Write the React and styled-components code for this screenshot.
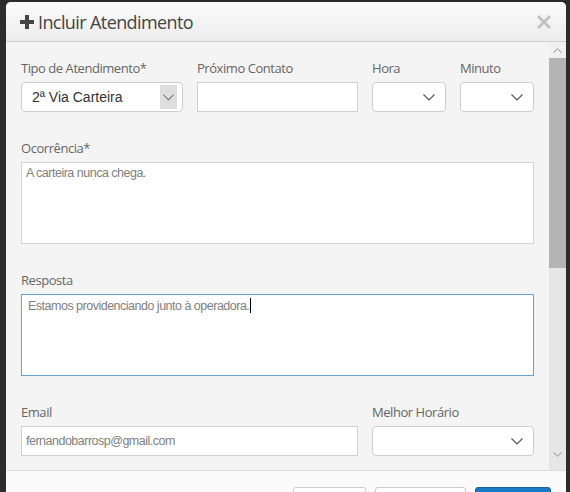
import React from 'react';
import styled, { createGlobalStyle } from 'styled-components';

const GlobalStyle = createGlobalStyle`
  html, body {
    margin: 0;
    padding: 0;
    background: #2c2c2c;
    overflow: hidden;
  }
  * {
    box-sizing: border-box;
  }
`;

const Backdrop = styled.div`
  width: 570px;
  height: 492px;
  padding: 2px 4px 0 6px;
  background: #2c2c2c;
  overflow: hidden;
`;

const Modal = styled.div`
  display: flex;
  flex-direction: column;
  width: 560px;
  height: 520px;
  background: #fafafa;
  border-radius: 5px 5px 0 0;
  overflow: hidden;
`;

const Header = styled.div`
  display: flex;
  align-items: center;
  justify-content: space-between;
  height: 40px;
  padding: 0 15px 0 14px;
  background: linear-gradient(to bottom, #fbfbfb, #ececec);
  border-bottom: 1px solid #cfcfcf;
  flex-shrink: 0;
`;

const Title = styled.h4`
  display: flex;
  align-items: center;
  gap: 4px;
  margin: 0;
  font-family: 'Open Sans', sans-serif;
  font-size: 18px;
  font-weight: 400;
  letter-spacing: -0.6px;
  color: #444;
`;

const CloseButton = styled.button`
  display: flex;
  padding: 0;
  border: none;
  background: none;
  cursor: pointer;
`;

const Body = styled.div`
  display: flex;
  height: 429px;
  background: #f4f4f4;
  border-bottom: 1px solid #dcdcdc;
  flex-shrink: 0;
`;

const Content = styled.div`
  flex: 1;
  padding: 17px 15px 0 15px;
  overflow: hidden;
`;

const Row = styled.div`
  display: grid;
  grid-template-columns: ${(props) => props.columns};
  column-gap: 14px;
  margin-bottom: 27px;
`;

const Field = styled.div`
  display: flex;
  flex-direction: column;
`;

const Label = styled.label`
  font-family: 'Open Sans', sans-serif;
  font-size: 13px;
  line-height: 18px;
  color: #666;
  margin-bottom: 5px;
  letter-spacing: -0.45px;
`;

const TextInput = styled.input`
  width: 100%;
  height: 30px;
  padding: 0 4px;
  border: 1px solid #cfcfcf;
  background: #fff;
  font-family: 'Liberation Sans', Arial, sans-serif;
  font-size: 12.5px;
  letter-spacing: -0.5px;
  color: #808080;
  outline: none;
`;

const SelectBox = styled.div`
  display: flex;
  align-items: center;
  height: 30px;
  padding: 0 0 0 ${(props) => (props.boxed ? '10px' : '6px')};
  border: 1px solid #cdcdcd;
  border-radius: 4px;
  background: #fff;
  font-family: 'Liberation Sans', Arial, sans-serif;
  font-size: 14px;
  color: #333;
`;

const SelectText = styled.span`
  flex: 1;
`;

const ArrowBox = styled.span`
  display: flex;
  align-items: center;
  justify-content: center;
  width: 17px;
  height: 24px;
  margin-right: 5px;
  background: #dedede;
`;

const ArrowPlain = styled.span`
  display: flex;
  align-items: center;
  margin-right: 10px;
`;

const TextArea = styled.div`
  height: 82px;
  padding: 3px ${(props) => (props.focused ? '6px' : '4px')};
  border: 1px solid ${(props) => (props.focused ? '#66a3d2' : '#d4d4d4')};
  background: #fff;
  font-family: 'Liberation Sans', Arial, sans-serif;
  font-size: 12.5px;
  letter-spacing: -0.5px;
  line-height: 15px;
  color: #808080;
`;

const Caret = styled.span`
  display: inline-block;
  width: 1px;
  height: 15px;
  margin-left: 1px;
  vertical-align: -3px;
  background: #000;
`;

const ScrollBar = styled.div`
  display: flex;
  flex-direction: column;
  width: 17px;
  background: #e6e6e6;
`;

const ScrollButton = styled.div`
  display: flex;
  align-items: center;
  justify-content: center;
  height: 16px;
  background: #f0f0f0;
`;

const ScrollThumb = styled.div`
  height: 210px;
  background: #b4b4b4;
`;

const ScrollTrack = styled.div`
  flex: 1;
`;

const ScrollButtonBottom = styled(ScrollButton)`
  background: #e6e6e6;
  height: 20px;
  align-items: flex-start;
  padding-top: 2px;
`;

const Footer = styled.div`
  display: flex;
  justify-content: flex-end;
  gap: 9px;
  padding: 16px 15px 0 0;
  background: #fafafa;
`;

const Button = styled.button`
  width: ${(props) => props.w}px;
  height: 30px;
  border-radius: 3px;
  border: 1px solid ${(props) => (props.primary ? '#16639f' : '#cccccc')};
  background: ${(props) => (props.primary ? '#1b7ac7' : '#fff')};
`;

const Chevron = ({ color = '#555', w = 12 }) => (
  <svg width={w} height="7" viewBox="0 0 12 7">
    <path d="M0.5 0.5 L6 6 L11.5 0.5" fill="none" stroke={color} strokeWidth="1.1" />
  </svg>
);

const SmallChevron = ({ up }) => (
  <svg width="9" height="5" viewBox="0 0 9 5">
    <path
      d={up ? 'M0.5 4.5 L4.5 0.8 L8.5 4.5' : 'M0.5 0.5 L4.5 4.2 L8.5 0.5'}
      fill="none"
      stroke="#8a8a8a"
      strokeWidth="1"
    />
  </svg>
);

const PlusIcon = () => (
  <svg width="14" height="14" viewBox="0 0 14 14">
    <path d="M5 0 H9 V5 H14 V9 H9 V14 H5 V9 H0 V5 H5 Z" fill="#444" />
  </svg>
);

const CloseIcon = () => (
  <svg width="14" height="14" viewBox="0 0 14 14">
    <path d="M2 0 L7 5 L12 0 L14 2 L9 7 L14 12 L12 14 L7 9 L2 14 L0 12 L5 7 L0 2 Z" fill="#c2c2c2" />
  </svg>
);

const Select = ({ value, boxed }) => (
  <SelectBox boxed={boxed}>
    <SelectText>{value}</SelectText>
    {boxed ? (
      <ArrowBox>
        <Chevron w={11} color="#666" />
      </ArrowBox>
    ) : (
      <ArrowPlain>
        <Chevron />
      </ArrowPlain>
    )}
  </SelectBox>
);

const App = () => {
  return (
    <>
      <GlobalStyle />
      <Backdrop>
        <Modal>
          <Header>
            <Title>
              <PlusIcon />
              Incluir Atendimento
            </Title>
            <CloseButton aria-label="Fechar">
              <CloseIcon />
            </CloseButton>
          </Header>
          <Body>
            <Content>
              <Row columns="162px 161px 74px 74px">
                <Field>
                  <Label>Tipo de Atendimento*</Label>
                  <Select value="2ª Via Carteira" boxed />
                </Field>
                <Field>
                  <Label>Próximo Contato</Label>
                  <TextInput type="text" defaultValue="" />
                </Field>
                <Field>
                  <Label>Hora</Label>
                  <Select value="" />
                </Field>
                <Field>
                  <Label>Minuto</Label>
                  <Select value="" />
                </Field>
              </Row>
              <Row columns="1fr">
                <Field>
                  <Label>Ocorrência*</Label>
                  <TextArea>A carteira nunca chega.</TextArea>
                </Field>
              </Row>
              <Row columns="1fr">
                <Field>
                  <Label>Resposta</Label>
                  <TextArea focused>
                    Estamos providenciando junto à operadora.
                    <Caret />
                  </TextArea>
                </Field>
              </Row>
              <Row columns="337px 162px">
                <Field>
                  <Label>Email</Label>
                  <TextInput type="text" defaultValue="fernandobarrosp@gmail.com" />
                </Field>
                <Field>
                  <Label>Melhor Horário</Label>
                  <Select value="" />
                </Field>
              </Row>
            </Content>
            <ScrollBar>
              <ScrollButton>
                <SmallChevron up />
              </ScrollButton>
              <ScrollThumb />
              <ScrollTrack />
              <ScrollButtonBottom>
                <SmallChevron />
              </ScrollButtonBottom>
            </ScrollBar>
          </Body>
          <Footer>
            <Button w={73} aria-label="Cancelar" />
            <Button w={91} aria-label="Limpar" />
            <Button w={76} primary aria-label="Salvar" />
          </Footer>
        </Modal>
      </Backdrop>
    </>
  );
};

export default App;
